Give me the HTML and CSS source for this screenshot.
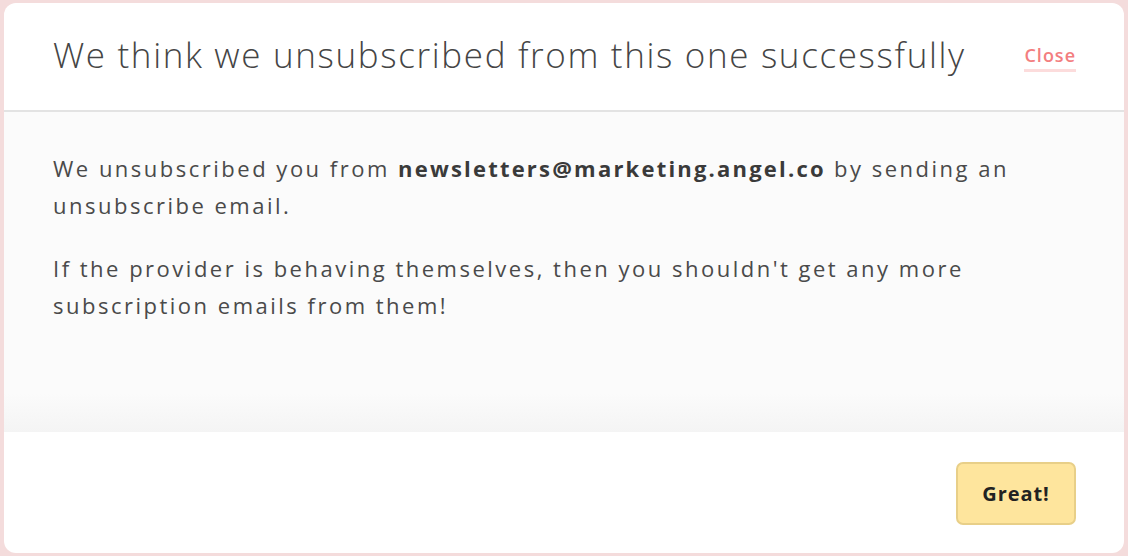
FILE: index.html
```html
<!DOCTYPE html>
<html lang="en">
<head>
  <meta charset="UTF-8">
  <title>Unsubscribed</title>
  <link rel="stylesheet" href="styles.css">
</head>
<body>
  <div class="modal">
    <!-- Header -->
    <div class="modal-header">
      <h2 class="modal-title">We think we unsubscribed from this one successfully</h2>
      <a href="#" class="close-link">Close</a>
    </div>

    <!-- Body -->
    <div class="modal-body">
      <p>We unsubscribed you from <strong>newsletters@marketing.angel.co</strong> by sending an unsubscribe email.</p>
      <p>If the provider is behaving themselves, then you shouldn't get any more subscription emails from them!</p>
    </div>

    <!-- Footer -->
    <div class="modal-footer">
      <button type="button" class="great-btn">Great!</button>
    </div>
  </div>
</body>
</html>
```

FILE: styles.css
```css
/* General Styles */
html, body {
  height: 100%;
}

body {
  margin: 0;
  padding: 3px 4px;
  box-sizing: border-box;
  background-color: #f4dcdc;
  font-family: "Open Sans", Arial, sans-serif;
  color: #444;
}

.modal {
  height: 550px;
  display: flex;
  flex-direction: column;
  background: #fff;
  border-radius: 12px;
  overflow: hidden;
}

/* Header */
.modal-header {
  height: 107px;
  display: flex;
  align-items: center;
  justify-content: space-between;
  padding: 0 48px 0 49px;
  border-bottom: 2px solid #e3e3e3;
}

.modal-title {
  margin: 0 0 4px;
  font-size: 35px;
  font-weight: 300;
  color: #454545;
  letter-spacing: 1.65px;
}

.close-link {
  color: #f37e7f;
  text-decoration: none;
  font-size: 18px;
  font-weight: 600;
  letter-spacing: 1px;
  padding-bottom: 2px;
  border-bottom: 3px solid #fcdcdc;
  margin-top: 2px;
}

/* Body */
.modal-body {
  height: 320px;
  box-sizing: border-box;
  padding: 38px 90px 0 49px;
  background: linear-gradient(to bottom, #fbfbfb 0, #fbfbfb 88%, #f4f4f4 100%);
}

.modal-body p {
  margin: 0 0 26px;
  font-size: 22px;
  line-height: 37px;
  font-weight: 400;
  letter-spacing: 2.5px;
  color: #4a4a4a;
}

.modal-body strong {
  font-weight: 700;
  color: #3a3a3a;
  letter-spacing: 2.2px;
}

/* Footer */
.modal-footer {
  flex: 1;
  display: flex;
  justify-content: flex-end;
  align-items: center;
  padding: 0 48px 0 0;
}

.great-btn {
  width: 120px;
  height: 63px;
  margin-top: 1px;
  background-color: #fee59d;
  border: 2px solid #e8cf88;
  border-radius: 7px;
  font-family: "Open Sans", Arial, sans-serif;
  font-size: 20px;
  font-weight: 700;
  letter-spacing: 0.9px;
  color: #222;
  cursor: pointer;
}
```
